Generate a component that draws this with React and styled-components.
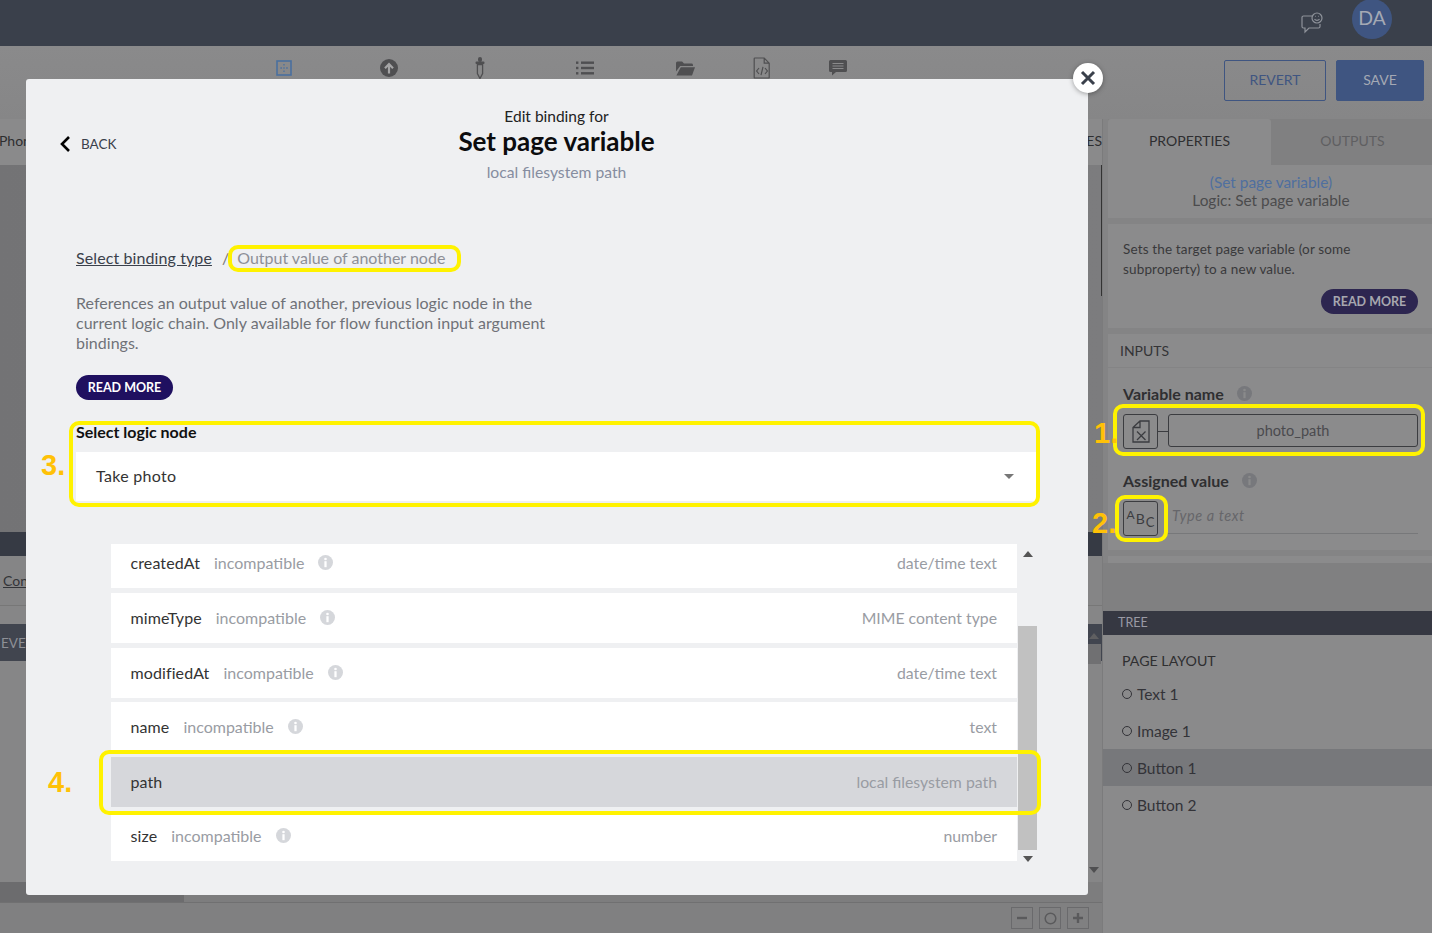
import styled, { createGlobalStyle } from 'styled-components'

const GlobalStyle = createGlobalStyle`
    html, body { margin: 0; padding: 0; }
    body { font-family: Lato, "Open Sans", sans-serif; }
    * { box-sizing: border-box; }
`

const fields = [
    { name: 'createdAt', type: 'date/time text', bad: true },
    { name: 'mimeType', type: 'MIME content type', bad: true },
    { name: 'modifiedAt', type: 'date/time text', bad: true },
    { name: 'name', type: 'text', bad: true },
    { name: 'path', type: 'local filesystem path', selected: true },
    { name: 'size', type: 'number', bad: true },
]

const treeItems = ['Text 1', 'Image 1', 'Button 1', 'Button 2']

const InfoIcon = ({ size = 15, color = '#d5d7db', dot = '#fff' }) => (
    <svg width={size} height={size} viewBox="0 0 16 16">
        <circle cx="8" cy="8" r="8" fill={color} />
        <circle cx="8" cy="4.2" r="1.4" fill={dot} />
        <rect x="6.8" y="6.6" width="2.4" height="6.4" fill={dot} />
    </svg>
)

const Index = () => {
    return (
        <>
            <GlobalStyle />
            <Page>
                <TopBar>
                    <svg width="24" height="22" viewBox="0 0 24 22" fill="none" stroke="#8e929a" strokeWidth="1.2">
                        <path d="M12 4H3.5A1.5 1.5 0 0 0 2 5.5v9A1.5 1.5 0 0 0 3.5 16H5v4l4-4h9.5a1.5 1.5 0 0 0 1.5-1.5V12" />
                        <circle cx="17" cy="6" r="5" />
                        <path d="M14.5 7.2c1.2 1.6 3.8 1.6 5 0M15.3 4.4h.6M18.2 4.4h.6" />
                    </svg>
                    <Avatar>DA</Avatar>
                </TopBar>

                <Toolbar>
                    <ToolIcon $first>
                        <svg width="16" height="16" viewBox="0 0 16 16" fill="none">
                            <rect x="1" y="1" width="14" height="14" stroke="#4a709f" strokeWidth="1.6" />
                            <path d="M8 4v1.5M8 7.3v1.5M8 10.6v1.5M4.4 8h1.5M10.2 8h1.5" stroke="#4a709f" strokeWidth="1.3" />
                        </svg>
                    </ToolIcon>
                    <ToolIcon $gap={88}>
                        <svg width="18" height="18" viewBox="0 0 18 18">
                            <circle cx="9" cy="9" r="9" fill="#4f4f51" />
                            <path d="M9 14.5V6M5 9.2 9 5l4 4.2" fill="none" stroke="#a5a5a6" strokeWidth="2.2" />
                        </svg>
                    </ToolIcon>
                    <ToolIcon $gap={76}>
                        <svg width="12" height="22" viewBox="0 0 12 22" fill="#4f4f51">
                            <rect x="4" y="0" width="4" height="5" rx="2" />
                            <rect x="1.5" y="4.5" width="9" height="2.6" rx="1" />
                            <path d="M3.4 7.5h5.2v9L6 21.5l-2.6-5z" fill="none" stroke="#4f4f51" strokeWidth="1.3" />
                        </svg>
                    </ToolIcon>
                    <ToolIcon $gap={90}>
                        <svg width="18" height="14" viewBox="0 0 18 14" fill="#4f4f51">
                            <rect x="0" y="0.5" width="2.4" height="2.4" /><rect x="5" y="0.5" width="13" height="2.4" />
                            <rect x="0" y="5.8" width="2.4" height="2.4" /><rect x="5" y="5.8" width="13" height="2.4" />
                            <rect x="0" y="11.1" width="2.4" height="2.4" /><rect x="5" y="11.1" width="13" height="2.4" />
                        </svg>
                    </ToolIcon>
                    <ToolIcon $gap={82}>
                        <svg width="19" height="15" viewBox="0 0 19 15" fill="#4f4f51">
                            <path d="M0 2a1.5 1.5 0 0 1 1.5-1.5h4.6L8 2.6h7.5A1.5 1.5 0 0 1 17 4v1H4.2L0 10.5z" />
                            <path d="M4.8 6.2H19l-3 8.3H.4z" />
                        </svg>
                    </ToolIcon>
                    <ToolIcon $gap={58}>
                        <svg width="18" height="22" viewBox="0 0 18 22" fill="none" stroke="#4f4f51" strokeWidth="1.2">
                            <path d="M1.8 1h9.4l5 5.2v14.2a.6.6 0 0 1-.6.6H1.8a.6.6 0 0 1-.6-.6V1.6a.6.6 0 0 1 .6-.6zM11.2 1v5.2h5" />
                            <path d="M6 11l-2.4 3L6 17M12 11l2.4 3L12 17M10 9.8 8 18.2" />
                        </svg>
                    </ToolIcon>
                    <ToolIcon $gap={58}>
                        <svg width="18" height="16" viewBox="0 0 18 16" fill="#4f4f51">
                            <path d="M1.5 0h15A1.5 1.5 0 0 1 18 1.5v9a1.5 1.5 0 0 1-1.5 1.5H7l-4 3.5V12H1.5A1.5 1.5 0 0 1 0 10.500v-9A1.500 1.500 0 0 1 1.500 0z" />
                            <path d="M3.500 3.500h11M3.500 6h11M3.500 8.500h11" stroke="#8a8a8b" strokeWidth="1.100" />
                        </svg>
                    </ToolIcon>
                    <ToolActions>
                        <GhostButton>REVERT</GhostButton>
                        <SolidButton>SAVE</SolidButton>
                    </ToolActions>
                </Toolbar>

                <Workspace>
                    <MainColumn>
                        <TabStrip>
                            <span>Phone</span>
                            <span>PROPERTIES</span>
                        </TabStrip>
                        <Canvas />
                        <DarkStrip />
                        <LinkStrip><u>Connect</u></LinkStrip>
                        <EventsBar>EVENTS</EventsBar>
                        <EventsBody>
                            <EventsScroll>
                                <ArrowUp $color="#5f5f61" />
                                <EventsThumb />
                                <ArrowDown $color="#4f4f51" />
                            </EventsScroll>
                        </EventsBody>
                        <HScroll><HThumb /></HScroll>
                        <ZoomBar>
                            <ZoomButton>
                                <svg width="12" height="12" viewBox="0 0 12 12"><rect x="1" y="4.800" width="10" height="2.400" fill="#5a5a5c" /></svg>
                            </ZoomButton>
                            <ZoomButton>
                                <svg width="13" height="13" viewBox="0 0 13 13"><circle cx="6.500" cy="6.500" r="5.300" fill="none" stroke="#5a5a5c" strokeWidth="1.500" /></svg>
                            </ZoomButton>
                            <ZoomButton>
                                <svg width="12" height="12" viewBox="0 0 12 12"><path d="M1 6h10M6 1v10" stroke="#5a5a5c" strokeWidth="2.400" /></svg>
                            </ZoomButton>
                        </ZoomBar>
                    </MainColumn>

                    <SidePanel>
                        <Tabs>
                            <Tab $active>PROPERTIES</Tab>
                            <Tab>OUTPUTS</Tab>
                        </Tabs>
                        <Card $height={53} $center>
                            <NodeLink>(Set page variable)</NodeLink>
                            <NodeKind>Logic: Set page variable</NodeKind>
                        </Card>
                        <Card $height={104} $top={6}>
                            <NodeDesc>Sets the target page variable (or some<br />subproperty) to a new value.</NodeDesc>
                            <SideMore>READ MORE</SideMore>
                        </Card>
                        <InputsHead>INPUTS</InputsHead>
                        <InputsBody>
                            <InputLabel>Variable name <InfoIcon size={15} color="#77787c" dot="#8a8a8b" /></InputLabel>
                            <BindRow>
                                <BindBox>
                                    <svg width="18" height="23" viewBox="0 0 18 23" fill="none" stroke="#3b3c40" strokeWidth="1.300">
                                        <path d="M1 7.500 8 1h9v21H1zM8 1v6.500H1M5 11.500l8.500 8.500M13.500 11.500 5 20" />
                                    </svg>
                                </BindBox>
                                <Connector />
                                <BindField>photo_path</BindField>
                            </BindRow>
                            <InputLabel $top={21}>Assigned value <InfoIcon size={15} color="#77787c" dot="#8a8a8b" /></InputLabel>
                            <BindRow>
                                <BindBox><small>A</small>B<small>C</small></BindBox>
                                <TextValue>Type a text</TextValue>
                            </BindRow>
                        </InputsBody>
                        <ThinBand />
                        <SideSpacer />
                        <TreeBar>TREE</TreeBar>
                        <TreeBody>
                            <TreeHead>PAGE LAYOUT</TreeHead>
                            {treeItems.map((item) => (
                                <TreeRow key={item} $selected={item === 'Button 1'}>{item}</TreeRow>
                            ))}
                        </TreeBody>
                    </SidePanel>
                </Workspace>

                <Modal>
                    <CloseButton>
                        <svg width="16" height="16" viewBox="0 0 16 16"><path d="M2 2l12 12M14 2 2 14" stroke="#3a404b" strokeWidth="3" /></svg>
                    </CloseButton>
                    <ModalHeader>
                        <BackLink>
                            <svg width="12" height="18" viewBox="0 0 12 18"><path d="M10 2 3 9l7 7" fill="none" stroke="#000" strokeWidth="2.600" /></svg>
                            BACK
                        </BackLink>
                        <Titles>
                            <EditFor>Edit binding for</EditFor>
                            <Title>Set page variable</Title>
                            <Subtitle>local filesystem path</Subtitle>
                        </Titles>
                    </ModalHeader>

                    <Crumbs>
                        <CrumbLink>Select binding type</CrumbLink>
                        <CrumbSep>/</CrumbSep>
                        <CrumbCurrent>Output value of another node</CrumbCurrent>
                    </Crumbs>
                    <Description>
                        References an output value of another, previous logic node in the
                        current logic chain. Only available for flow function input argument
                        bindings.
                    </Description>
                    <ReadMore>READ MORE</ReadMore>

                    <FieldLabel>Select logic node</FieldLabel>
                    <Select>Take photo<Caret /></Select>

                    <ListWrap>
                        <ListViewport>
                            <ListInner>
                                {fields.map((f) => (
                                    <FieldRow key={f.name} $selected={f.selected}>
                                        <FieldName>{f.name}</FieldName>
                                        {f.bad && <Incompatible>incompatible</Incompatible>}
                                        {f.bad && <InfoIcon />}
                                        <FieldType>{f.type}</FieldType>
                                    </FieldRow>
                                ))}
                            </ListInner>
                        </ListViewport>
                        <ListScroll>
                            <ArrowUp $color="#555" />
                            <ListThumb />
                            <ArrowDown $color="#555" />
                        </ListScroll>
                    </ListWrap>
                </Modal>

                <Highlight $x={228} $y={245} $w={233} $h={27} />
                <Highlight $x={69} $y={421} $w={971} $h={86} />
                <Highlight $x={99} $y={750} $w={942} $h={65} />
                <Highlight $x={1113} $y={404} $w={312} $h={52} />
                <Highlight $x={1115} $y={495} $w={53} $h={47} />
                <StepNumber $x={1094} $y={417}>1.</StepNumber>
                <StepNumber $x={1092} $y={507}>2.</StepNumber>
                <StepNumber $x={41} $y={449}>3.</StepNumber>
                <StepNumber $x={48} $y={766}>4.</StepNumber>
            </Page>
        </>
    );
}

export default Index

const Page = styled.div`
    position: relative;
    width: 1432px;
    height: 933px;
    overflow: hidden;
    display: flex;
    flex-direction: column;
    background: #868687;
`

const TopBar = styled.header`
    height: 46px;
    flex: none;
    background: #3a404b;
    display: flex;
    align-items: center;
    justify-content: flex-end;
    padding-right: 40px;
    gap: 28px;
`

const Avatar = styled.div`
    width: 40px;
    height: 40px;
    margin-top: -8px;
    padding-bottom: 3px;
    border-radius: 50%;
    background: #3f5581;
    color: #a4a9b4;
    font-size: 19.5px;
    display: flex;
    align-items: center;
    justify-content: center;
`

const Toolbar = styled.div`
    height: 73px;
    flex: none;
    display: flex;
    align-items: flex-start;
    padding: 11px 8px 0 276px;
    background: linear-gradient(#8a8a8b, #868687);
`

const ToolIcon = styled.div`
    display: flex;
    align-items: center;
    justify-content: center;
    height: 22px;
    margin-left: ${(p) => (p.$first ? 0 : p.$gap)}px;
`

const ToolActions = styled.div`
    margin-left: auto;
    display: flex;
    gap: 10px;
    margin-top: 3px;
`

const GhostButton = styled.div`
    width: 102px;
    height: 41px;
    padding-bottom: 2px;
    border: 1.5px solid #3f5581;
    border-radius: 2px;
    color: #3f5581;
    font-size: 14px;
    display: flex;
    align-items: center;
    justify-content: center;
`

const SolidButton = styled(GhostButton)`
    width: 88px;
    background: #3f5581;
    color: #a4a9b4;
`

const Workspace = styled.div`
    flex: 1;
    min-height: 0;
    display: flex;
`

const MainColumn = styled.div`
    width: 1103px;
    flex: none;
    display: flex;
    flex-direction: column;
    border-right: 1px solid #7b7b7c;
`

const TabStrip = styled.div`
    height: 46px;
    flex: none;
    padding-bottom: 4px;
    background: #8a8a8b;
    display: flex;
    align-items: center;
    justify-content: space-between;
    font-size: 14px;
    color: #2e2e30;
    span:first-child { margin-left: -1px; }
`

const Canvas = styled.div`
    height: 367px;
    flex: none;
    background: linear-gradient(90deg, #737375, #7c7c7e);
    position: relative;
    &::after {
        content: '';
        position: absolute;
        right: 0;
        top: 0;
        width: 1px;
        height: 131px;
        background: #333;
    }
`

const DarkStrip = styled.div`
    height: 24px;
    flex: none;
    background: #363a44;
`

const LinkStrip = styled.div`
    height: 50px;
    flex: none;
    padding: 16px 0 0 3px;
    font-size: 14px;
    color: #333438;
    background: #858586;
    border-bottom: 1px solid #777;
`

const EventsBar = styled.div`
    height: 37px;
    margin-top: 18px;
    flex: none;
    background: #41454f;
    color: #8e9096;
    font-size: 13.5px;
    display: flex;
    align-items: center;
    padding-left: 1px;
`

const EventsBody = styled.div`
    flex: 1;
    display: flex;
    justify-content: flex-end;
    margin-top: -37px;
`

const EventsScroll = styled.div`
    width: 14px;
    margin-right: 1px;
    padding: 9px 0;
    display: flex;
    flex-direction: column;
    align-items: center;
`

const EventsThumb = styled.div`
    width: 100%;
    height: 20px;
    margin: 5px 0 auto;
    background: #707072;
`

const HScroll = styled.div`
    height: 21px;
    flex: none;
    background: #7d7d7e;
    border-bottom: 1px solid #707071;
`

const HThumb = styled.div`
    width: 184px;
    height: 100%;
    background: #6c6c6e;
`

const ZoomBar = styled.div`
    height: 30px;
    flex: none;
    background: #808081;
    display: flex;
    align-items: center;
    justify-content: flex-end;
    gap: 6px;
    padding-right: 13px;
`

const ZoomButton = styled.div`
    width: 22px;
    height: 22px;
    border: 1px solid #6a6a6c;
    display: flex;
    align-items: center;
    justify-content: center;
`

const SidePanel = styled.aside`
    flex: 1;
    display: flex;
    flex-direction: column;
    padding-left: 5px;
    background: #848485;
`

const Tabs = styled.div`
    height: 46px;
    flex: none;
    display: flex;
    background: #808081;
`

const Tab = styled.div`
    width: 163px;
    padding-bottom: 4px;
    background: ${(p) => (p.$active ? '#8b8b8c' : 'transparent')};
    color: ${(p) => (p.$active ? '#2e2e30' : '#5f5f61')};
    border-radius: 3px 3px 0 0;
    font-size: 14px;
    display: flex;
    align-items: center;
    justify-content: center;
`

const Card = styled.div`
    height: ${(p) => p.$height}px;
    flex: none;
    background: #8b8b8c;
    margin-top: ${(p) => p.$top || 0}px;
    padding: ${(p) => (p.$center ? '8px 0 0' : '15px 16px 0 15px')};
    text-align: ${(p) => (p.$center ? 'center' : 'left')};
`

const NodeLink = styled.div`
    font-size: 15.4px;
    line-height: 18px;
    color: #4f6f9f;
`

const NodeKind = styled.div`
    font-size: 15.4px;
    line-height: 18px;
    color: #4b4b4d;
`

const NodeDesc = styled.div`
    font-size: 13.5px;
    letter-spacing: 0.15px;
    line-height: 20px;
    color: #39393b;
`

const SideMore = styled.div`
    width: 97px;
    height: 25px;
    margin: 10px 0 0 auto;
    border-radius: 12.5px;
    background: #2d2650;
    color: #a7a7af;
    font-size: 12.5px;
    font-weight: 700;
    display: flex;
    align-items: center;
    justify-content: center;
`

const InputsHead = styled.div`
    height: 34px;
    margin-top: 6px;
    flex: none;
    background: #8b8b8c;
    border-bottom: 1px solid #848485;
    display: flex;
    align-items: center;
    padding-left: 12px;
    font-size: 14px;
    color: #343436;
`

const InputsBody = styled.div`
    height: 182px;
    flex: none;
    background: #8b8b8c;
    padding: 15px 16px 0 15px;
`

const InputLabel = styled.div`
    display: flex;
    align-items: center;
    gap: 13px;
    height: 20px;
    margin: ${(p) => p.$top || 0}px 0 11px;
    font-size: 16px;
    font-weight: 700;
    color: #2f2f31;
`

const BindRow = styled.div`
    display: flex;
    align-items: center;
    height: 35px;
`

const BindBox = styled.div`
    width: 35px;
    height: 35px;
    flex: none;
    border: 1.3px solid #3b3c40;
    border-radius: 3px;
    display: flex;
    align-items: center;
    justify-content: center;
    font-size: 14px;
    line-height: 1;
    color: #3b3c40;
    small {
        font-size: 12px;
        margin-top: -8px;
        margin-right: 1px;
    }
    small:last-child {
        font-size: 13px;
        margin-top: 7px;
        margin-left: 1px;
        margin-right: 0;
    }
`

const Connector = styled.div`
    width: 10px;
    height: 1.5px;
    background: #3b3c40;
`

const BindField = styled.div`
    flex: 1;
    height: 33px;
    margin-top: -2px;
    border: 1.4px solid #3b3c40;
    border-radius: 3px;
    display: flex;
    align-items: center;
    justify-content: center;
    font-size: 14.5px;
    color: #4a4a4e;
`

const TextValue = styled.div`
    flex: 1;
    height: 33px;
    margin: 0 0 2px 10px;
    padding-left: 4px;
    border-bottom: 1px solid #77787a;
    font-size: 14.5px;
    letter-spacing: 0.6px;
    font-style: italic;
    line-height: 29px;
    color: #66666a;
`

const ThinBand = styled.div`
    height: 7px;
    margin-top: 6px;
    flex: none;
    background: #8b8b8c;
`

const SideSpacer = styled.div`
    height: 48px;
    flex: none;
    margin-left: -5px;
    background: #808081;
`

const TreeBar = styled.div`
    height: 24px;
    flex: none;
    margin-left: -5px;
    padding: 0 0 2px 15px;
    background: #363842;
    color: #9a9aa5;
    font-size: 12.5px;
    display: flex;
    align-items: center;
`

const TreeBody = styled.div`
    flex: 1;
    margin-left: -5px;
    padding-top: 16px;
    background: #8a8a8b;
`

const TreeHead = styled.div`
    height: 20px;
    margin-bottom: 4px;
    padding-left: 19px;
    font-size: 14.2px;
    line-height: 20px;
    color: #2f2f31;
`

const TreeRow = styled.div`
    height: 37px;
    display: flex;
    align-items: center;
    gap: 5px;
    padding-left: 19px;
    background: ${(p) => (p.$selected ? '#77787b' : 'transparent')};
    font-size: 15.5px;
    color: #333338;
    &::before {
        content: '';
        width: 8px;
        height: 8px;
        border: 1.6px solid #333338;
        border-radius: 50%;
    }
`

const Modal = styled.section`
    position: absolute;
    left: 26px;
    top: 79px;
    width: 1062px;
    height: 816px;
    padding: 27px 50px 0;
    background: #eff0f2;
    border-radius: 3px;
`

const CloseButton = styled.div`
    position: absolute;
    top: -16px;
    right: -15px;
    width: 30px;
    height: 30px;
    border-radius: 50%;
    background: #fff;
    box-shadow: 0 1px 5px rgba(0, 0, 0, 0.35);
    display: flex;
    align-items: center;
    justify-content: center;
`

const ModalHeader = styled.div`
    display: grid;
    grid-template-columns: 1fr auto 1fr;
    align-items: center;
    margin: 0 0 0 -17px;
`

const BackLink = styled.div`
    display: flex;
    align-items: center;
    gap: 10px;
    margin-top: -1px;
    font-size: 13.5px;
    color: #3a404b;
`

const Titles = styled.div`
    grid-column: 2;
    text-align: center;
    transform: translateX(8px);
`

const EditFor = styled.div`
    font-size: 15.5px;
    line-height: 20px;
    color: #222;
`

const Title = styled.div`
    font-size: 26px;
    line-height: 30px;
    font-weight: 700;
    color: #0c0c0e;
`

const Subtitle = styled.div`
    margin-top: 6px;
    font-size: 15.7px;
    line-height: 20px;
    color: #868da0;
`

const Crumbs = styled.div`
    display: flex;
    margin-top: 66px;
    font-size: 16px;
    line-height: 20px;
`

const CrumbLink = styled.span`
    letter-spacing: 0.1px;
    color: #3a404b;
    text-decoration: underline;
`

const CrumbSep = styled.span`
    margin: 0 8px 0 10px;
    color: #777;
`

const CrumbCurrent = styled.span`
    color: #8d8f97;
`

const Description = styled.p`
    width: 480px;
    margin: 25px 0 0;
    font-size: 16px;
    letter-spacing: 0.02px;
    line-height: 20px;
    color: #6f7278;
`

const ReadMore = styled.div`
    width: 97px;
    height: 25px;
    margin-top: 22px;
    border-radius: 12.5px;
    background: #1f1060;
    color: #fff;
    font-size: 12.5px;
    font-weight: 700;
    display: flex;
    align-items: center;
    justify-content: center;
`

const FieldLabel = styled.div`
    margin-top: 22px;
    font-size: 16px;
    font-weight: 700;
    line-height: 20px;
    color: #111;
`

const Select = styled.div`
    position: relative;
    width: 961px;
    height: 49px;
    margin-top: 10px;
    padding-left: 20px;
    background: #fff;
    font-size: 16px;
    letter-spacing: 0.3px;
    line-height: 47px;
    color: #333;
`

const Caret = styled.span`
    position: absolute;
    right: 23px;
    top: 22px;
    border-left: 5.5px solid transparent;
    border-right: 5.5px solid transparent;
    border-top: 5px solid #777;
`

const ListWrap = styled.div`
    display: flex;
    align-items: flex-start;
    width: 926px;
    margin: 43px 0 0 35px;
`

const ListViewport = styled.div`
    width: 906px;
    height: 317px;
    overflow: hidden;
`

const ListInner = styled.div`
    display: flex;
    flex-direction: column;
    gap: 4.6px;
    margin-top: -5.6px;
`

const FieldRow = styled.div`
    height: 50px;
    flex: none;
    display: flex;
    align-items: center;
    gap: 14px;
    padding: 0 20px 1px 19.5px;
    background: ${(p) => (p.$selected ? '#d6d7db' : '#fff')};
    font-size: 16px;
`

const FieldName = styled.span`
    letter-spacing: 0.1px;
    color: #333;
`

const Incompatible = styled.span`
    color: #999ca3;
`

const FieldType = styled.span`
    margin-left: auto;
    font-size: 15.8px;
    color: #999ca3;
`

const ListScroll = styled.div`
    width: 19px;
    margin-left: 1px;
    display: flex;
    flex-direction: column;
    align-items: center;
    padding-top: 7px;
`

const ListThumb = styled.div`
    width: 100%;
    height: 224px;
    margin: 69px 0 6px;
    background: #c1c1c1;
`

const ArrowUp = styled.span`
    flex: none;
    border-left: 5px solid transparent;
    border-right: 5px solid transparent;
    border-bottom: 6px solid ${(p) => p.$color};
`

const ArrowDown = styled.span`
    flex: none;
    border-left: 5px solid transparent;
    border-right: 5px solid transparent;
    border-top: 6px solid ${(p) => p.$color};
`

const Highlight = styled.div`
    position: absolute;
    left: ${(p) => p.$x}px;
    top: ${(p) => p.$y}px;
    width: ${(p) => p.$w}px;
    height: ${(p) => p.$h}px;
    border: 4px solid #fff200;
    border-radius: 10px;
    pointer-events: none;
`

const StepNumber = styled.div`
    position: absolute;
    left: ${(p) => p.$x}px;
    top: ${(p) => p.$y}px;
    font-family: "Liberation Sans", sans-serif;
    font-size: 29px;
    font-weight: 700;
    line-height: 33px;
    color: #ffc107;
`
